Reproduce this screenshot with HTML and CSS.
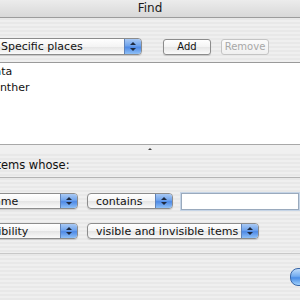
FILE: index.html
```html
<!DOCTYPE html>
<html>
<head>
<meta charset="utf-8">
<link rel="stylesheet" href="styles.css">
</head>
<body>
<div class="window">
  <div class="titlebar">Find</div>
  <div class="search-in">
    <div class="popup popup-places"><span class="label">Specific places</span><span class="stepper"><i class="up"></i><i class="down"></i></span></div>
    <div class="button btn-add">Add</div>
    <div class="button btn-remove">Remove</div>
  </div>
  <div class="list">
    <div class="item item-data">Data</div>
    <div class="item item-panther">Panther</div>
  </div>
  <div class="splitter"><span class="caret"></span></div>
  <div class="criteria-label">Find items whose:</div>
  <div class="criteria">
    <div class="row">
      <div class="popup popup-attr popup-name"><span class="label">name</span><span class="stepper"><i class="up"></i><i class="down"></i></span></div>
      <div class="popup popup-op"><span class="label">contains</span><span class="stepper"><i class="up"></i><i class="down"></i></span></div>
      <div class="field"></div>
    </div>
    <div class="row">
      <div class="popup popup-attr popup-vis"><span class="label">visibility</span><span class="stepper"><i class="up"></i><i class="down"></i></span></div>
      <div class="popup popup-value"><span class="label">visible and invisible items</span><span class="stepper"><i class="up"></i><i class="down"></i></span></div>
    </div>
  </div>
  <div class="footer">
    <div class="search-btn"></div>
  </div>
</div>
</body>
</html>
```
FILE: styles.css
```css
html, body {
  margin: 0;
  padding: 0;
}
body {
  width: 300px;
  height: 300px;
  overflow: hidden;
  font-family: "DejaVu Sans", "Liberation Sans", sans-serif;
  font-size: 11px;
  color: #111;
}
.window {
  width: 300px;
  height: 300px;
  overflow: hidden;
  background: repeating-linear-gradient(to bottom, #efefef 0, #efefef 2px, #e8e8e8 2px, #e8e8e8 4px);
}
.titlebar {
  height: 17px;
  line-height: 17px;
  text-align: center;
  font-size: 12px;
  color: #1a1a1a;
  background: linear-gradient(to bottom, #ececec, #d8d8d8);
  border-bottom: 1px solid #9c9c9c;
}
.search-in {
  display: flex;
  align-items: center;
  margin-top: 20px;
  height: 17px;
  margin-bottom: 7px;
}
.popup {
  display: flex;
  align-items: center;
  box-sizing: border-box;
  height: 17px;
  border: 1px solid #8c8c8c;
  border-radius: 4px;
  background: linear-gradient(to bottom, #ffffff 0%, #f4f4f4 50%, #e4e4e4 51%, #fafafa 100%);
  box-shadow: 0 1px 1px rgba(0,0,0,0.15);
  overflow: hidden;
}
.popup .label {
  flex: 1;
  padding-left: 8px;
  white-space: nowrap;
  overflow: hidden;
  line-height: 15px;
}
.stepper {
  position: relative;
  align-self: stretch;
  width: 16px;
  flex: none;
  background: linear-gradient(to bottom, #a9c9f4 0%, #6fa3ec 45%, #4f8ae6 55%, #8fc0f6 100%);
  border-left: 1px solid #5f82b8;
}
.stepper .up, .stepper .down {
  position: absolute;
  left: 5px;
  width: 0;
  height: 0;
  border-left: 3px solid transparent;
  border-right: 3px solid transparent;
}
.stepper .up {
  top: 3px;
  border-bottom: 3px solid #1e2a40;
}
.stepper .down {
  bottom: 3px;
  border-top: 3px solid #1e2a40;
}
.popup-places {
  margin-left: -8px;
  width: 150px;
}
.button {
  box-sizing: border-box;
  height: 16px;
  line-height: 14px;
  text-align: center;
  border: 1px solid #8c8c8c;
  border-radius: 3px;
  background: linear-gradient(to bottom, #ffffff 0%, #f3f3f3 50%, #e6e6e6 51%, #fbfbfb 100%);
  box-shadow: 0 1px 1px rgba(0,0,0,0.15);
  font-size: 10px;
}
.btn-add {
  margin-left: 21px;
  width: 48px;
}
.btn-remove {
  margin-left: 10px;
  width: 48px;
  color: #a8a8a8;
  border-color: #c4c4c4;
  box-shadow: none;
  background: linear-gradient(to bottom, #fbfbfb, #f0f0f0);
}
.list {
  height: 80px;
  background: #ffffff;
  border-top: 1px solid #9a9a9a;
  padding-top: 1px;
  box-sizing: content-box;
}
.item {
  height: 16px;
  line-height: 16px;
  font-size: 11px;
}
.item-data {
  margin-left: -14px;
}
.item-panther {
  margin-left: -13px;
}
.splitter {
  height: 8px;
  border-top: 1px solid #a8a8a8;
  display: flex;
  justify-content: center;
  align-items: center;
  background: #f0f0f0;
}
.caret {
  width: 0;
  height: 0;
  border-left: 2px solid transparent;
  border-right: 2px solid transparent;
  border-bottom: 2px solid #444;
}
.criteria-label {
  height: 24px;
  line-height: 24px;
  margin-left: -34px;
  border-bottom: 1px solid #b4b4b4;
  white-space: nowrap;
  font-size: 11.5px;
}
.criteria {
  display: flex;
  flex-direction: column;
  gap: 14px;
  padding-top: 15px;
  padding-bottom: 14px;
  border-bottom: 1px solid #c8c8c8;
}
.row {
  display: flex;
  align-items: center;
  height: 16px;
}
.popup-attr {
  height: 16px;
}
.popup-op, .popup-value {
  height: 16px;
  margin-left: 9px;
}
.popup-name {
  margin-left: -22px;
  width: 100px;
}
.popup-vis {
  margin-left: -26px;
  width: 104px;
}
.popup-op {
  width: 86px;
}
.popup-value {
  width: 172px;
}
.field {
  box-sizing: border-box;
  margin-left: 8px;
  width: 118px;
  height: 17px;
  background: #fff;
  border: 1px solid #9aaabd;
  box-shadow: 0 0 0 1px #c5d4e6;
}
.footer {
  display: flex;
  justify-content: flex-end;
  padding-top: 14px;
}
.search-btn {
  margin-right: -32px;
  width: 40px;
  height: 16px;
  border-radius: 8px;
  border: 1px solid #3a67a8;
  background: linear-gradient(to bottom, #bfdcfb 0%, #74adf0 45%, #4a8de6 55%, #9fd0fb 100%);
}
```
